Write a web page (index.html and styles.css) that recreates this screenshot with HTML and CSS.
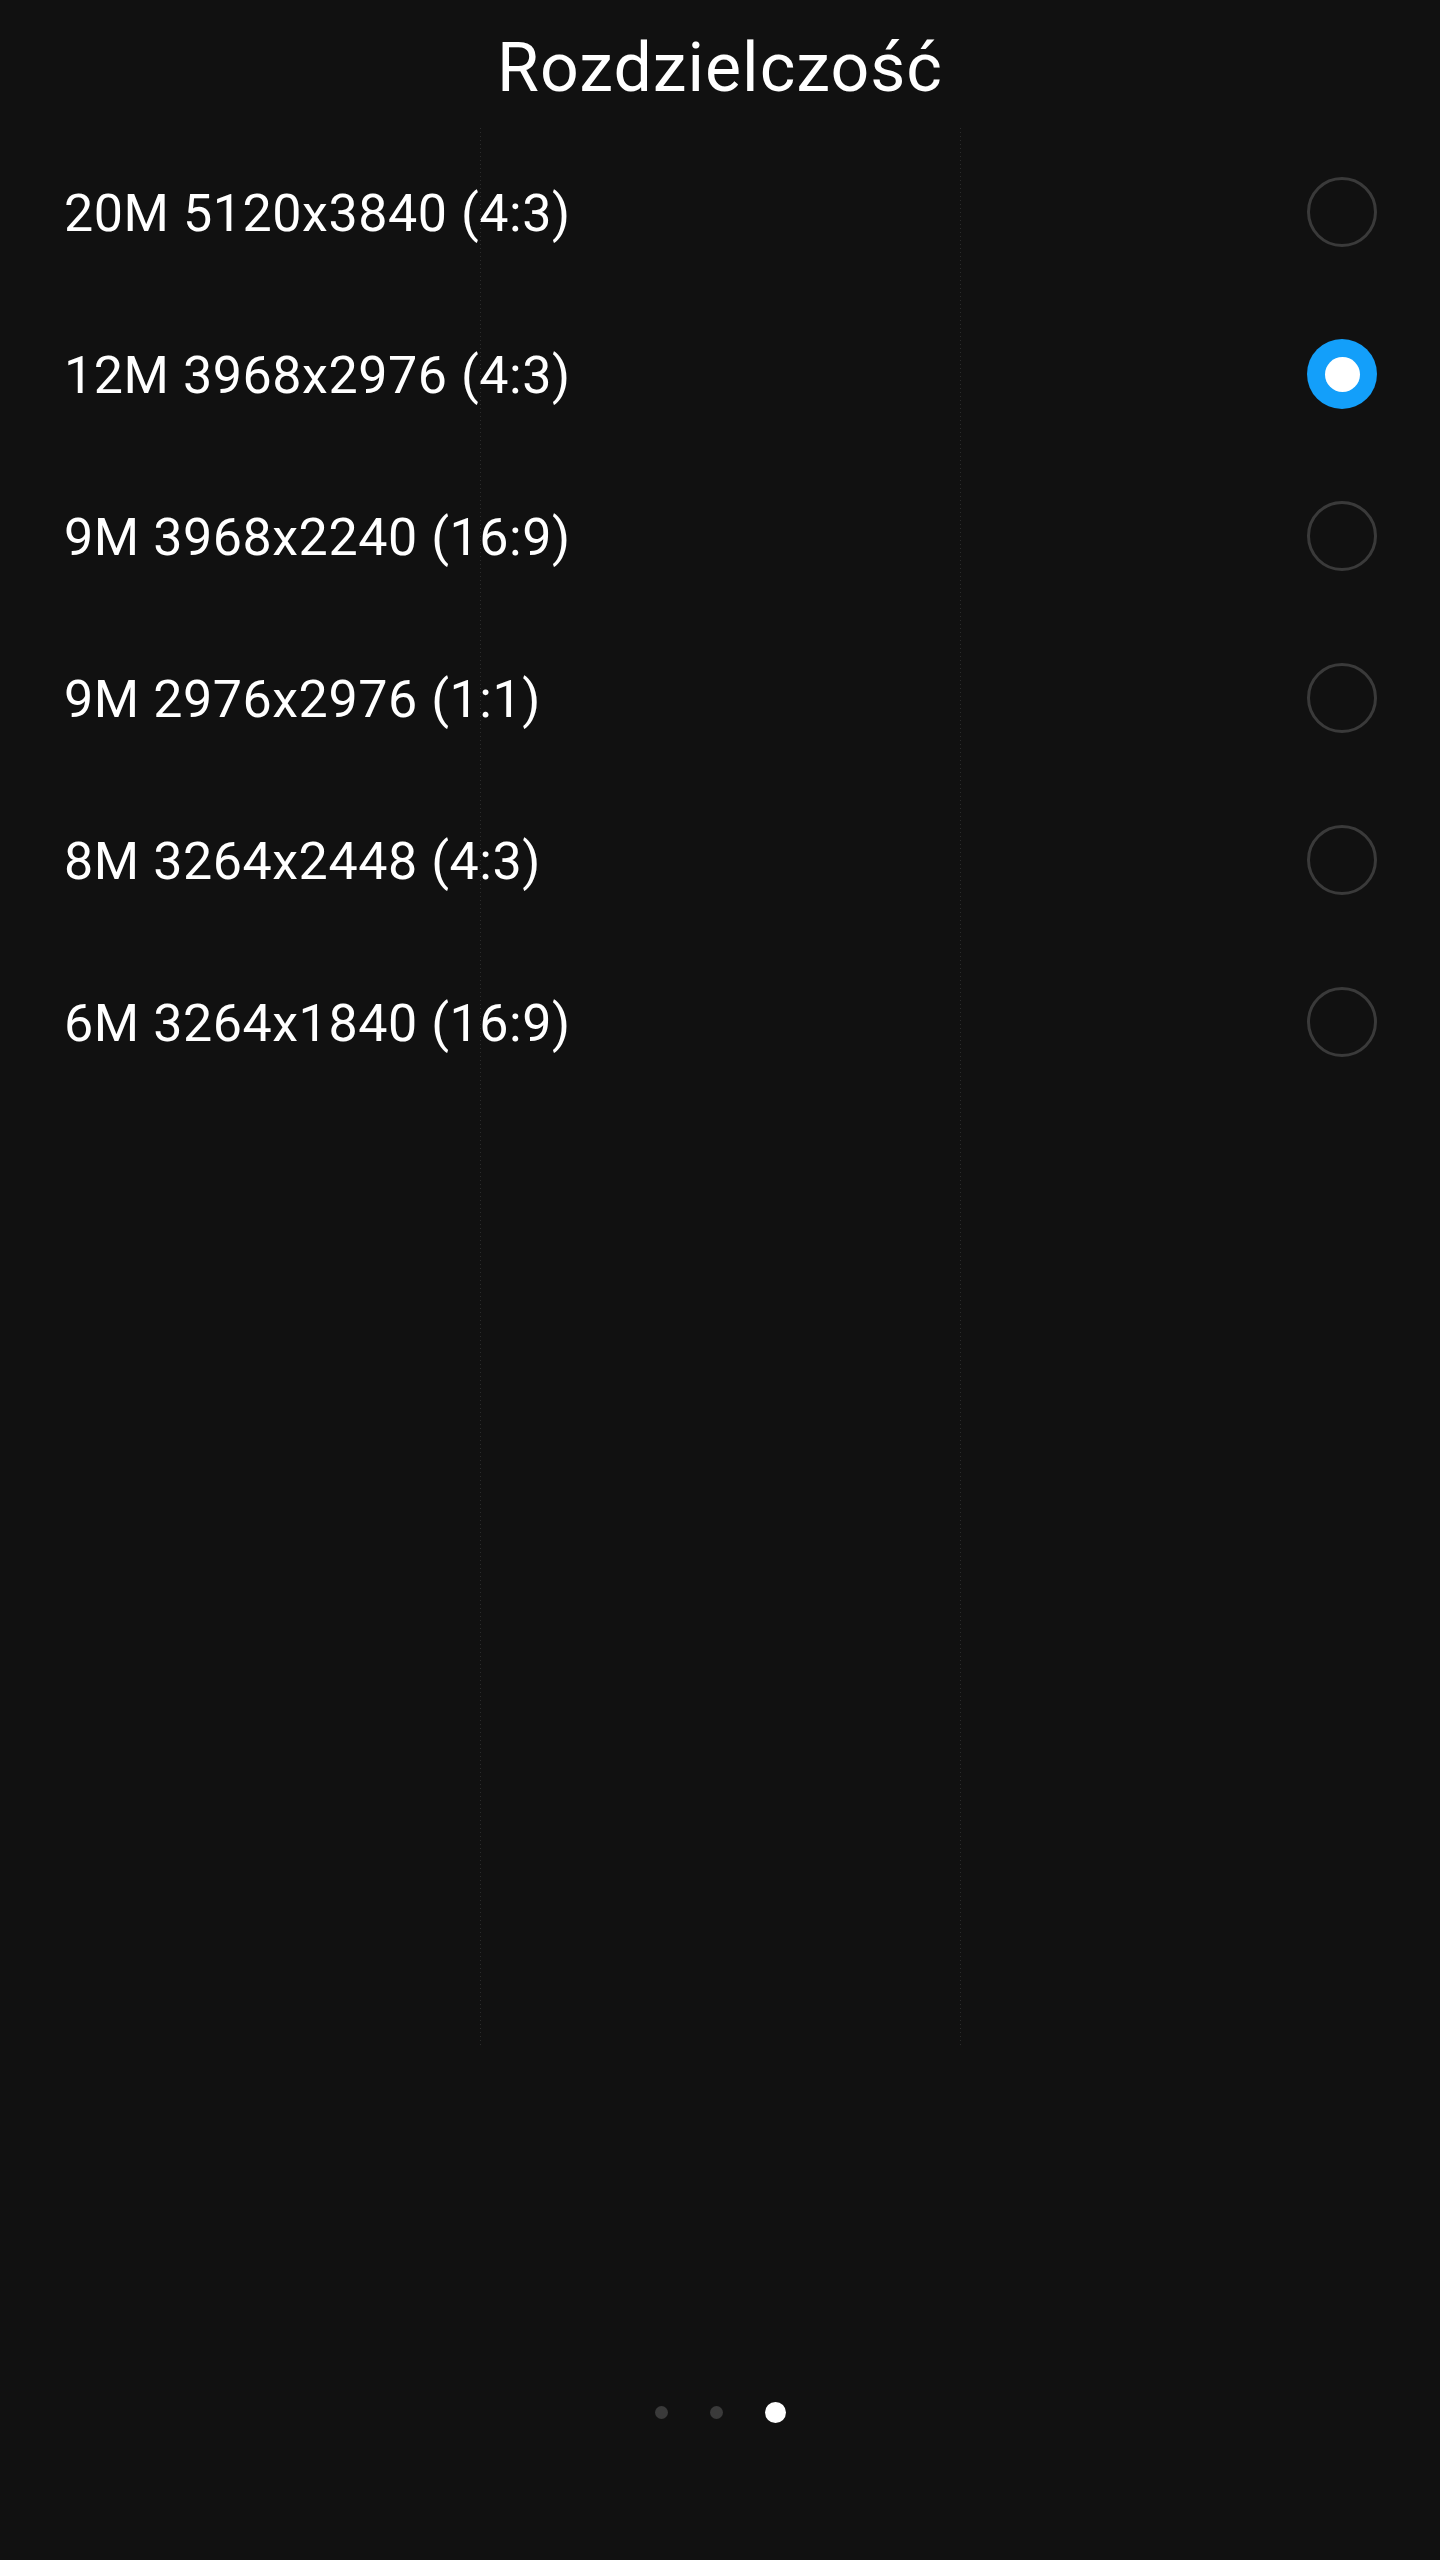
FILE: index.html
```html
<!DOCTYPE html>
<html lang="pl">
<head>
<meta charset="utf-8">
<title>Rozdzielczość</title>
<link rel="stylesheet" href="styles.css">
</head>
<body>
<div class="screen">
  <div class="grid" aria-hidden="true">
    <span class="gline g1"></span>
    <span class="gline g2"></span>
  </div>
  <header class="header">
    <h1 class="title">Rozdzielczość</h1>
  </header>
  <ul class="list">
    <li class="row"><span class="label">20M 5120x3840 (4:3)</span><span class="radio"></span></li>
    <li class="row"><span class="label">12M 3968x2976 (4:3)</span><span class="radio checked"></span></li>
    <li class="row"><span class="label">9M 3968x2240 (16:9)</span><span class="radio"></span></li>
    <li class="row"><span class="label">9M 2976x2976 (1:1)</span><span class="radio"></span></li>
    <li class="row"><span class="label">8M 3264x2448 (4:3)</span><span class="radio"></span></li>
    <li class="row"><span class="label">6M 3264x1840 (16:9)</span><span class="radio"></span></li>
  </ul>
  <footer class="pager">
    <span class="dot"></span>
    <span class="dot"></span>
    <span class="dot active"></span>
  </footer>
</div>
</body>
</html>
```
FILE: styles.css
```css
* { box-sizing: border-box; }
html, body {
  margin: 0;
  padding: 0;
  background: #111111;
}
body {
  font-family: Roboto, "Noto Sans", "Liberation Sans", sans-serif;
  color: #ffffff;
}
.screen {
  position: relative;
  width: 1440px;
  height: 2560px;
  display: flex;
  flex-direction: column;
  overflow: hidden;
}
.grid {
  position: absolute;
  inset: 0;
  pointer-events: none;
}
.gline {
  position: absolute;
  top: 128px;
  width: 1px;
  height: 1917px;
  background: repeating-linear-gradient(to bottom, #2c2c2c 0 1px, transparent 1px 4px);
}
.g1 { left: 480px; }
.g2 { left: 960px; }
.header {
  padding: 34px 0 29px;
  text-align: center;
}
.title {
  margin: 0;
  font-size: 68px;
  font-weight: 400;
  line-height: 68px;
  letter-spacing: 1px;
}
.list {
  list-style: none;
  margin: 0;
  padding: 0;
}
.row {
  height: 162px;
  display: flex;
  align-items: center;
  justify-content: space-between;
  padding: 0 63px 0 64px;
}
.label {
  font-size: 52px;
  line-height: 52px;
  letter-spacing: 0.55px;
  padding-top: 3px;
}
.radio {
  width: 70px;
  height: 70px;
  border-radius: 50%;
  border: 3px solid #3a3a3a;
  display: flex;
  align-items: center;
  justify-content: center;
}
.radio.checked {
  border: none;
  background: #139ffa;
}
.radio.checked::after {
  content: "";
  width: 35px;
  height: 35px;
  border-radius: 50%;
  background: #ffffff;
}
.pager {
  margin-top: auto;
  padding-bottom: 137px;
  display: flex;
  justify-content: center;
  align-items: center;
  gap: 42px;
  height: 158px;
}
.dot {
  width: 13px;
  height: 13px;
  border-radius: 50%;
  background: #3a3a3a;
}
.dot.active {
  width: 21px;
  height: 21px;
  background: #ffffff;
}
```
